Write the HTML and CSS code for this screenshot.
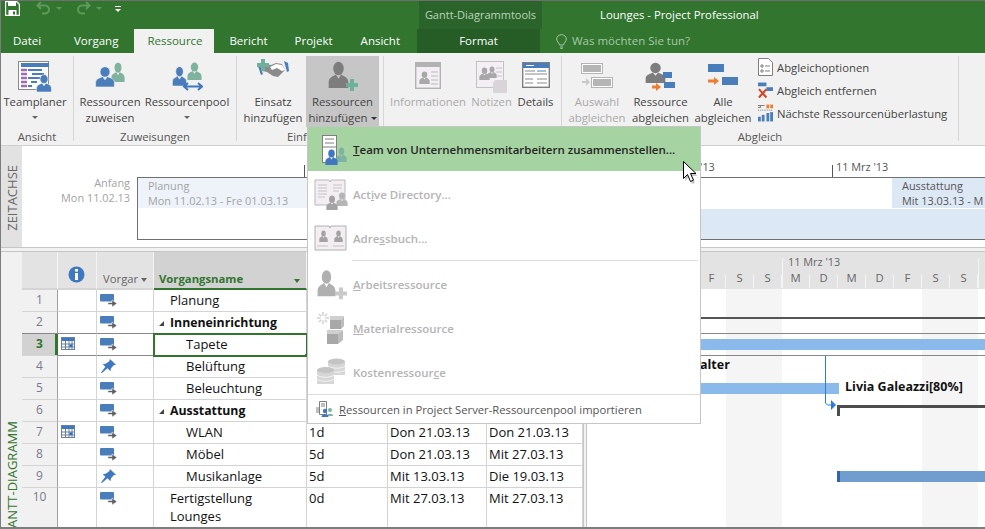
FILE: index.html
```html
<!DOCTYPE html>
<html lang="de">
<head>
<meta charset="utf-8">
<title>Lounges - Project Professional</title>
<link rel="stylesheet" href="styles.css">
</head>
<body>
<svg class="defs" width="0" height="0">
  <symbol id="person" viewBox="0 0 32 32" preserveAspectRatio="none"><circle cx="16" cy="9" r="8"/><path d="M1 32v-7c0-6 8-7 11-9l4 5 4-5c3 2 11 3 11 9v7z"/></symbol>
  <symbol id="mode" viewBox="0 0 17 13"><rect x="0" y="0" width="14" height="7.500" rx="1" fill="#4a7ebb"/><path d="M8 8.500h4V6l5 3.500-5 3.500v-2.500H8z" fill="#5f5f5f" stroke="#fff" stroke-width=".5"/></symbol>
  <symbol id="pin" viewBox="0 0 16 16"><path d="M9.500 0 16 6l-2.500.6-3 3.400-.4 3-3.200-3.200L1 15l-1-.5 4.600-6.200L1.800 5.400l3.200-.3 3.800-2.800z" fill="#3f78c0"/></symbol>
  <symbol id="cal" viewBox="0 0 14 13"><rect x=".5" y=".5" width="13" height="12" fill="#fff" stroke="#6b7f99"/><rect x="1" y="1" width="12" height="3" fill="#3f78c0"/><path d="M1 7h12M1 10h12M4.500 4v8M8 4v8M11 4v8" stroke="#6b7f99"/><rect x="8.500" y="7.500" width="3" height="2.500" fill="#1c6fd0"/></symbol>
</svg>
<div class="app">
  <header class="titlebar">
    <div class="qat">
      <svg class="qat-save" width="15" height="15" viewBox="0 0 15 15"><path d="M.5.500h11l3 3v11H.5z" fill="none" stroke="#fff" stroke-width="1.400"/><rect x="3" y="0" width="8" height="5" fill="#fff"/><rect x="3.500" y="9" width="8" height="5.500" fill="#fff"/><rect x="8" y="10.500" width="2" height="3" fill="#31752f"/></svg>
      <svg class="qat-undo" width="15" height="14" viewBox="0 0 15 14"><path d="M5 1 1.500 4.500 5 8M2 4.500h7a4 4 0 0 1 0 8H6" fill="none" stroke="#5f9a5c" stroke-width="2"/></svg>
      <span class="qat-caret"></span>
      <svg class="qat-redo" width="15" height="14" viewBox="0 0 15 14"><path d="m10 1 3.500 3.500L10 8m3-3.500H6a4 4 0 0 0 0 8h3" fill="none" stroke="#5f9a5c" stroke-width="2"/></svg>
      <span class="qat-caret"></span>
      <span class="qat-more"></span>
    </div>
    <div class="ctx-title">Gantt-Diagrammtools</div>
    <div class="doc-title">Lounges - Project Professional</div>
  </header>
  <nav class="tabbar">
    <span class="tab tab-file">Datei</span>
    <span class="tab">Vorgang</span>
    <span class="tab tab-active">Ressource</span>
    <span class="tab tab-n">Bericht</span>
    <span class="tab tab-n">Projekt</span>
    <span class="tab tab-last">Ansicht</span>
    <span class="tab tab-ctx">Format</span>
    <span class="tell">
      <svg width="11" height="15" viewBox="0 0 11 15"><path d="M3.500 11C3 8.500.7 7.500.7 5a4.800 4.300 0 0 1 9.600 0c0 2.500-2.300 3.500-2.800 6zM4 13h3M4.500 14.500h2" fill="none" stroke="#a9c9a7"/></svg>
      Was möchten Sie tun?
    </span>
  </nav>

  <section class="ribbon">
    <div class="grp grp-view">
      <div class="grp-body">
        <div class="btn w66">
          <svg class="ico ico-5" width="34" height="31" viewBox="0 0 34 31"><rect x=".5" y=".5" width="30" height="28" fill="#fff" stroke="#8a8a8a"/><rect x="3" y="2" width="28" height="4" fill="#4a7ebb"/><path d="M3 9h6M3 13h6M3 17h6M3 21h6M3 25h6" stroke="#9e6bb5" stroke-width="2.500"/><path d="M10 9h14M14 13h12M10 17h12M13 21h6M10 25h4" stroke="#4a7ebb" stroke-width="2"/><use href="#person" x="18" y="13" width="16" height="18" fill="#4a7ebb" stroke="#fff"/></svg>
          <span class="lbl">Teamplaner</span><span class="caret"></span>
        </div>
      </div>
      <div class="grp-name">Ansicht</div>
    </div>
    <div class="grp grp-assign">
      <div class="grp-body">
        <div class="btn w60">
          <svg class="ico" width="32" height="32" viewBox="0 0 32 32"><use href="#person" x="17" y="3" width="14" height="20" fill="#7fb3a0"/><use href="#person" x="1" y="7" width="20" height="21" fill="#4a7ebb" stroke="#f1f1f1"/></svg>
          <span class="lbl">Ressourcen<br>zuweisen</span>
        </div>
        <div class="btn w84 ml5">
          <svg class="ico" width="32" height="32" viewBox="0 0 32 32"><use href="#person" x="16" y="3" width="15" height="18" fill="#7fb3a0"/><use href="#person" x="1" y="7" width="15" height="20" fill="#4a7ebb" stroke="#f1f1f1"/><path d="M13 27.500h18M17 24l-4 3.500 4 3.500M27 24l4 3.500-4 3.500" fill="none" stroke="#3f78c0" stroke-width="2"/></svg>
          <span class="lbl">Ressourcenpool</span><span class="caret"></span>
        </div>
      </div>
      <div class="grp-name">Zuweisungen</div>
    </div>
    <div class="grp grp-insert">
      <div class="grp-body">
        <div class="btn w60">
          <svg class="ico" width="32" height="22" viewBox="0 0 32 22"><path d="M4 7l5-2 5 1 5-2 6 1 3 6-7 7-5-1-6-4-5-1z" fill="#8b8b8b"/><path d="M13 8l6-3 6 1 3 5-3 1-5-3-5 2z" fill="#fff"/><path d="M1 7l3 9 2-1-3-9zM27 2l4 2 1 8-2 1z" fill="#4a7ebb"/><path d="M4 0h4v4h4v4H8v4H4V8H0V4h4z" fill="#6fb09a"/></svg>
          <span class="lbl">Einsatz<br>hinzufügen</span>
        </div>
        <div class="btn w73 btn-hot ml3">
          <svg class="ico" width="32" height="32" viewBox="0 0 32 32"><use href="#person" x="1" y="2" width="21" height="27" fill="#7d7d7d"/><path d="M23 20h4v4h4v4h-4v4h-4v-4h-4v-4h4z" fill="#6fb09a"/></svg>
          <span class="lbl">Ressourcen<br>hinzufügen<span class="caret-in"></span></span>
        </div>
      </div>
      <div class="grp-name">Einfügen</div>
    </div>
    <div class="grp grp-props">
      <div class="grp-body">
        <div class="btn w76 off">
          <svg class="ico ico-6" width="26" height="27" viewBox="0 0 26 27"><rect x=".7" y=".7" width="24.600" height="25.600" fill="#f4eff4" stroke="#b3b3b3" stroke-width="1.400"/><rect x="1" y="1" width="24" height="4" fill="#b3b3b3"/><use href="#person" x="4" y="9" width="11" height="13" fill="#a8a8a8"/><path d="M16 10h7M16 14h7M16 18h7M16 22h7" stroke="#b9b9b9"/></svg>
          <span class="lbl">Informationen</span>
        </div>
        <div class="btn w41 ml5 off">
          <svg class="ico ico-5" width="32" height="32" viewBox="0 0 32 32"><rect x=".5" y=".5" width="27" height="26" fill="#f4eff4" stroke="#c2c2c2"/><use href="#person" x="11" y="5" width="10" height="12" fill="#a8a8a8"/><use href="#person" x="3" y="6" width="11" height="13" fill="#a8a8a8"/><path d="M20 7h6M20 11h6M20 15h6" stroke="#c2c2c2"/><path d="M17 32V22l2-3h12v13z" fill="#d8d4d8"/></svg>
          <span class="lbl">Notizen</span>
        </div>
        <div class="btn w35 ml6">
          <svg class="ico ico-6" width="28" height="26" viewBox="0 0 28 26"><rect x=".7" y=".7" width="26.600" height="24.600" fill="#fff" stroke="#7f7f7f" stroke-width="1.400"/><rect x="1" y="1" width="26" height="5" fill="#4a7ebb"/><path d="M4 3.500h8M17 9h8" stroke="#fff"/><path d="M3 9h10M3 12h22M3 17h8M3 21h8M15 17h10M15 21h10" stroke="#8a8a8a"/><path d="M15 9h9" stroke="#4a7ebb"/></svg>
          <span class="lbl">Details</span>
        </div>
      </div>
    </div>
    <div class="grp grp-level">
      <div class="grp-body">
        <div class="btn w58 off">
          <svg class="ico" width="32" height="32" viewBox="0 0 32 32"><rect x=".5" y="4.500" width="21" height="10" fill="#fff" stroke="#b5b5b5"/><rect x="2" y="6" width="18" height="7" fill="#b5b5b5"/><rect x="10.500" y="18.500" width="21" height="10" fill="#fff" stroke="#b5b5b5"/><rect x="12" y="20" width="18" height="7" fill="#b5b5b5"/><path d="M1 22h4v-3l4 4-4 4v-3H1z" fill="#c9c9c9"/></svg>
          <span class="lbl">Auswahl<br>abgleichen</span>
        </div>
        <div class="btn w57 ml6">
          <svg class="ico" width="32" height="34" viewBox="0 0 32 34"><use href="#person" x="0" y="3" width="21" height="21" fill="#7d7d7d"/><rect x="18" y="13" width="9" height="6" fill="#4a7ebb"/><rect x="19" y="23" width="11" height="6" fill="#4a7ebb"/><path d="M7 26.500h4V24l5 4-5 4v-2.500H7z" fill="#ed7d31"/></svg>
          <span class="lbl">Ressource<br>abgleichen</span>
        </div>
        <div class="btn w58 ml5">
          <svg class="ico" width="32" height="32" viewBox="0 0 32 32"><rect x="1" y="5" width="16" height="8" fill="#4a7ebb"/><rect x="15" y="18" width="16" height="8" fill="#4a7ebb"/><path d="M1 20.500h6V18l5 4-5 4v-2.500H1z" fill="#ed7d31"/></svg>
          <span class="lbl">Alle<br>abgleichen</span>
        </div>
        <ul class="small-list">
          <li><svg width="15" height="18" viewBox="0 0 15 18"><path d="M.5.500h10l4 4v13H.500z" fill="#fff" stroke="#7f7f7f"/><path d="M3 7h2v2H3zm0 5h2v2H3zM7 8h5M7 13h5" stroke="#7f7f7f" fill="none"/></svg>Abgleichoptionen</li>
          <li><svg width="15" height="17" viewBox="0 0 16 17"><rect x="0" y="0" width="9" height="4" fill="#4a7ebb"/><rect x="9" y="5" width="7" height="4" fill="#4a7ebb"/><path d="m1 7 8 9M9 7l-8 9" stroke="#d24726" stroke-width="2.200"/></svg>Abgleich entfernen</li>
          <li><svg width="15" height="18" viewBox="0 0 16 18"><path d="M0 1h7M0 3h3l-1-2" stroke="#777" fill="none"/><rect x="9" y="0" width="3" height="4" fill="#ed7d31"/><rect x="13" y="0" width="3" height="4" fill="#ed7d31"/><path d="M0 6h16" stroke="#777" stroke-dasharray="1 1"/><rect x="0" y="13" width="3" height="5" fill="#4a7ebb"/><rect x="4" y="11" width="3" height="7" fill="#4a7ebb"/><rect x="9" y="9" width="3" height="9" fill="#4a7ebb"/><rect x="13" y="8" width="3" height="10" fill="#4a7ebb"/></svg>Nächste Ressourcenüberlastung</li>
        </ul>
      </div>
      <div class="grp-name">Abgleich</div>
    </div>
  </section>

  <section class="timeline">
    <div class="side side-time"><span>ZEITACHSE</span></div>
    <div class="tl-canvas">
      <div class="tl-tick tl-t1"></div>
      <div class="tl-tick tl-t2"></div>
      <div class="tl-date tl-d1">'13</div>
      <div class="tl-date tl-d2">11 Mrz '13</div>
      <div class="tl-start">Anfang<br>Mon 11.02.13</div>
      <div class="tl-box"></div>
      <div class="tl-task tl-plan">Planung<br>Mon 11.02.13 - Fre 01.03.13</div>
      <div class="tl-task tl-aus">Ausstattung<br>Mit 13.03.13 - M</div>
      <div class="tl-fill"></div>
    </div>
  </section>
  <div class="divider"></div>

  <section class="main">
    <div class="side side-gantt"><span>GANTT-DIAGRAMM</span></div>
    <table class="sheet">
      <colgroup><col class="c-n"><col class="c-i"><col class="c-m"><col class="c-name"><col class="c-d"><col class="c-s"><col class="c-f"></colgroup>
      <thead>
        <tr>
          <th></th>
          <th><svg class="info" width="17" height="17" viewBox="0 0 17 17"><circle cx="8.500" cy="8.500" r="8" fill="#3f78c0"/><rect x="7" y="3" width="3" height="2.600" fill="#fff"/><rect x="7" y="7" width="3" height="7" fill="#fff"/></svg></th>
          <th class="th-mode">Vorgar<span class="hcaret"></span></th>
          <th class="th-name">Vorgangsname<span class="gcaret"></span></th>
          <th></th><th></th><th></th>
        </tr>
      </thead>
      <tbody>
        <tr><td class="num">1</td><td></td><td><svg class="m" width="17" height="13"><use href="#mode"/></svg></td><td class="t1">Planung</td><td></td><td></td><td></td></tr>
        <tr class="before-sel"><td class="num">2</td><td></td><td><svg class="m" width="17" height="13"><use href="#mode"/></svg></td><td class="t1 b"><span class="tri"></span>Inneneinrichtung</td><td></td><td></td><td></td></tr>
        <tr class="sel"><td class="num">3</td><td><svg class="c" width="14" height="13"><use href="#cal"/></svg></td><td><svg class="m" width="17" height="13"><use href="#mode"/></svg></td><td class="t2 cur">Tapete</td><td></td><td></td><td></td></tr>
        <tr><td class="num">4</td><td></td><td><svg class="p" width="15" height="15"><use href="#pin"/></svg></td><td class="t2">Belüftung</td><td></td><td></td><td></td></tr>
        <tr><td class="num">5</td><td></td><td><svg class="m" width="17" height="13"><use href="#mode"/></svg></td><td class="t2">Beleuchtung</td><td></td><td></td><td></td></tr>
        <tr><td class="num">6</td><td></td><td><svg class="m" width="17" height="13"><use href="#mode"/></svg></td><td class="t1 b"><span class="tri"></span>Ausstattung</td><td></td><td></td><td></td></tr>
        <tr><td class="num">7</td><td><svg class="c" width="14" height="13"><use href="#cal"/></svg></td><td><svg class="m" width="17" height="13"><use href="#mode"/></svg></td><td class="t2">WLAN</td><td>1d</td><td>Don 21.03.13</td><td>Don 21.03.13</td></tr>
        <tr><td class="num">8</td><td></td><td><svg class="m" width="17" height="13"><use href="#mode"/></svg></td><td class="t2">Möbel</td><td>5d</td><td>Don 21.03.13</td><td>Mit 27.03.13</td></tr>
        <tr><td class="num">9</td><td></td><td><svg class="p" width="15" height="15"><use href="#pin"/></svg></td><td class="t2">Musikanlage</td><td>5d</td><td>Mit 13.03.13</td><td>Die 19.03.13</td></tr>
        <tr class="tall"><td class="num">10</td><td></td><td><svg class="m" width="17" height="13"><use href="#mode"/></svg></td><td class="t1">Fertigstellung<br>Lounges</td><td>0d</td><td>Mit 27.03.13</td><td>Mit 27.03.13</td></tr>
      </tbody>
    </table>
    <div class="gutter"></div>
    <div class="gantt">
      <div class="g-head">
        <span class="g-month">11 Mrz '13</span>
        <span class="g-tick g-m1"></span><span class="g-tick g-m2"></span>
        <div class="g-days"><span>F</span><span>S</span><span>S</span><span>M</span><span>D</span><span>M</span><span>D</span><span>F</span><span>S</span><span>S</span></div>
      </div>
      <div class="g-we g-we1"></div>
      <div class="g-we g-we2"></div>
      <div class="g-sum1"></div>
      <div class="g-line g-l1"></div>
      <div class="g-line g-l2"></div>
      <div class="g-bar g-b1"></div>
      <div class="g-label g-alter">alter</div>
      <div class="g-bar g-b2"></div>
      <div class="g-label g-livia">Livia Galeazzi[80%]</div>
      <svg class="g-link" width="16" height="54" viewBox="0 0 16 54"><path d="M1.500 0v47l2 2h5" fill="none" stroke="#2b7cd3"/><path d="M7 44l5 5-5 5z" fill="#2b7cd3"/></svg>
      <div class="g-sum2"></div>
      <div class="g-bar2"></div>
    </div>
  </section>
  <div class="baseline"></div>

  <div class="menu">
    <div class="mi mi-hot">
      <svg class="mico" width="34" height="32" viewBox="0 0 34 32"><rect x="8.500" y="2.500" width="14" height="27" fill="#fff" stroke="#7f7f7f"/><path d="M11 6h9M11 10h9M8 14h15" stroke="#7f7f7f"/><use href="#person" x="22" y="14" width="11" height="15" fill="#7fb3a0"/><use href="#person" x="11" y="16" width="13" height="16" fill="#3f78c0"/></svg>
      <span><u>T</u>eam von Unternehmensmitarbeitern zusammenstellen...</span>
    </div>
    <div class="mi">
      <svg class="mico" width="34" height="32" viewBox="0 0 34 32"><path d="M1 2h14l1 2 1-2h14v25H1z" fill="#f2eef2" stroke="#b9b9b9"/><path d="M4 7h9M4 10h9M4 13h9M4 16h9M4 19h7M19 7h9M19 10h9M19 13h6" stroke="#c4c4c4"/><use href="#person" x="22" y="14" width="12" height="14" fill="#b5b5b5"/><use href="#person" x="12" y="17" width="12" height="15" fill="#a3a3a3"/></svg>
      <span>Act<u>i</u>ve Directory...</span>
    </div>
    <div class="mi">
      <svg class="mico" width="34" height="26" viewBox="0 0 34 26"><path d="M1 1h14l1 2 1-2h15v24H1z" fill="#f2eef2" stroke="#b0b0b0"/><use href="#person" x="5" y="5" width="9" height="12" fill="#a3a3a3"/><use href="#person" x="20" y="5" width="9" height="12" fill="#a3a3a3"/><path d="M3 21h11M19 21h11" stroke="#c4c4c4"/></svg>
      <span>Adre<u>s</u>sbuch...</span>
    </div>
    <div class="msep msep-in"></div>
    <div class="mi">
      <svg class="mico" width="34" height="31" viewBox="0 0 34 31"><use href="#person" x="3" y="1" width="19" height="27" fill="#b0b0b0"/><path d="M25 19h4v4h4v4h-4v4h-4v-4h-4v-4h4z" fill="#c9c9c9"/></svg>
      <span><u>A</u>rbeitsressource</span>
    </div>
    <div class="mi">
      <svg class="mico" width="34" height="32" viewBox="0 0 34 32"><path d="M9 0v12M3 6h12M5 2l8 8M13 2l-8 8" stroke="#d0d0d0" stroke-width="1.500"/><circle cx="9" cy="6" r="2.500" fill="#fff"/><path d="M16 4h14l-3 4H16z" fill="#cfcfcf"/><rect x="16" y="8" width="11" height="9" fill="#a8a8a8"/><path d="M27 8l3-4v10l-3 3z" fill="#bcbcbc"/><path d="M13 18h16l-5 4H13z" fill="#cfcfcf"/><rect x="13" y="22" width="11" height="10" fill="#a8a8a8"/><path d="M24 22l5-4v10l-5 4z" fill="#bcbcbc"/></svg>
      <span><u>M</u>aterialressource</span>
    </div>
    <div class="mi">
      <svg class="mico" width="34" height="28" viewBox="0 0 34 28"><rect x="14" y="3" width="17" height="14" fill="#d6d6d6"/><ellipse cx="22.500" cy="3.500" rx="8.500" ry="3" fill="#c4c4c4"/><path d="M14 8c3 3 14 3 17 0M14 12c3 3 14 3 17 0" stroke="#f4f4f4" fill="none"/><rect x="3" y="12" width="17" height="14" fill="#d6d6d6"/><ellipse cx="11.500" cy="12" rx="8.500" ry="3" fill="#c4c4c4"/><path d="M3 17c3 3 14 3 17 0M3 21c3 3 14 3 17 0" stroke="#f4f4f4" fill="none"/></svg>
      <span>Kostenressour<u>c</u>e</span>
    </div>
    <div class="msep"></div>
    <div class="mi-import">
      <svg width="17" height="16" viewBox="0 0 17 16"><path d="M3.500.500h7v13h-7z" fill="#fff" stroke="#7f7f7f"/><path d="M5 3h4M5 5h4M0 7h3M0 9h3M0 11h3" stroke="#7f7f7f"/><circle cx="14" cy="9" r="2" fill="#7fb3a0"/><path d="M11 15c0-3 6-3 6 0z" fill="#7fb3a0"/><circle cx="9" cy="10" r="2.200" fill="#3f78c0"/><path d="M5.500 16c0-4 7-4 7 0z" fill="#3f78c0"/></svg>
      <span><u>R</u>essourcen in Project Server-Ressourcenpool importieren</span>
    </div>
  </div>

  <svg class="pointer" width="15" height="24" viewBox="0 0 15 24"><path d="M2 3v17l4-4 3 7 3-1-3-7h5.500z" fill="#000" opacity=".22"/><path d="M.5.500v17l4-4 3 7 3-1.300-3-6.700h5.500z" fill="#fff" stroke="#000"/></svg>
</div>
</body>
</html>
```

FILE: styles.css
```css
* { box-sizing: border-box; }
html, body { margin: 0; padding: 0; background: #fff; }
.defs { position: absolute; }
.app {
  position: relative;
  width: 985px;
  height: 529px;
  overflow: hidden;
  display: flex;
  flex-direction: column;
  border-top: 1px solid #6f6f6f;
  border-left: 1px solid #7d7d7d;
  font-family: "Open Sans", "Noto Sans", sans-serif;
  font-size: 11.3px;
  color: #444;
}

/* title bar */
.titlebar { height: 28px; flex: none; display: flex; background: #31752f; color: #fff; }
.qat { width: 418px; display: flex; align-items: flex-start; padding-left: 4px; }
.qat-undo { margin: 0 0 0 16px; }
.qat-redo { margin: 0 0 0 14px; }
.qat-caret { width: 0; height: 0; margin: 6px 0 0 5px; border: 3px solid transparent; border-top: 3px solid #5f9a5c; border-bottom: 0; }
.qat-more { position: relative; width: 6px; height: 5px; margin: 5px 0 0 13px; border-top: 1px solid #fff; }
.qat-more::after { content: ""; position: absolute; left: 0; top: 2px; border: 3px solid transparent; border-top: 3px solid #fff; border-bottom: 0; }
.ctx-title { width: 123px; background: #2a642a; color: #bcd4ba; text-align: center; line-height: 27px; font-size: 11px; }
.doc-title { padding-left: 58px; line-height: 27px; }

/* tabs */
.tabbar { height: 24px; flex: none; display: flex; gap: 3px; background: #31752f; color: #fff; line-height: 24px; font-size: 11.5px; }
.tab { padding: 0 13px; }
.tab-n { padding: 0 12px; }
.tab-file { padding-left: 12px; width: 52px; margin-right: 5px; }
.tab-active { background: #f1f1f1; color: #31752f; width: 80px; }
.tab-last { margin-right: 1px; }
.tab-ctx { width: 123px; text-align: center; background: #265c26; }
.tell { margin-left: 13px; display: flex; align-items: center; gap: 5px; color: #a9c9a7; }

/* ribbon */
.ribbon { height: 93px; flex: none; display: flex; background: #f1f1f1; border-bottom: 1px solid #cfcfcf; padding-top: 3px; position: relative; }
.grp { display: flex; flex-direction: column; height: 85px; border-right: 1px solid #d6d6d6; position: relative; }
.grp-view { width: 73px; }
.grp-assign { width: 163px; }
.grp-insert { width: 147px; }
.grp-props { width: 178px; }
.grp-level { width: 397px; }
.grp-body { display: flex; height: 71px; padding-left: 6px; }
.grp-view .grp-body { padding-left: 1px; }
.grp-name { text-align: center; line-height: 16px; color: #555; margin-top: 2px; }
.btn { flex: none; display: flex; flex-direction: column; align-items: center; height: 71px; position: relative; line-height: 16px; text-align: center; white-space: nowrap; padding-top: 38px; }
.btn .ico { position: absolute; left: 50%; top: 3px; transform: translateX(-50%); }
.btn .ico-5 { top: 5px; }
.btn .ico-6 { top: 6px; }
.btn-hot { background: #c6c6c6; }
.off { color: #a9a9a9; }
.w35 { width: 35px; } .w41 { width: 41px; } .w57 { width: 57px; } .w58 { width: 58px; }
.w60 { width: 60px; } .w66 { width: 66px; } .w73 { width: 73px; } .w76 { width: 76px; } .w84 { width: 84px; }
.ml3 { margin-left: 3px; } .ml5 { margin-left: 5px; } .ml6 { margin-left: 6px; }
.caret { width: 0; height: 0; margin-top: 6px; border: 3px solid transparent; border-top: 3px solid #666; border-bottom: 0; }
.caret-in { display: inline-block; width: 0; height: 0; margin: 0 0 2px 3px; border: 3px solid transparent; border-top: 3px solid #333; border-bottom: 0; }
.small-list { list-style: none; margin: 0; padding: 2px 0 0 6px; display: flex; flex-direction: column; gap: 5px; white-space: nowrap; }
.small-list li { display: flex; align-items: center; gap: 4px; height: 18px; }
.small-list svg { flex: none; }

/* side strips */
.side { width: 21px; flex: none; display: flex; align-items: flex-end; justify-content: center; background: #e2e2e2; color: #666; font-size: 13px; }
.side span { writing-mode: vertical-rl; transform: rotate(180deg); white-space: nowrap; }
.side-time { padding-bottom: 16px; }
.side-gantt { background: #f1f1f1; color: #31752f; overflow: hidden; }
.side-gantt span { margin-bottom: -10px; }

/* timeline */
.timeline { height: 101px; flex: none; display: flex; font-size: 10.9px; }
.tl-canvas { position: relative; flex: 1; background: #fff; }
.tl-tick { position: absolute; top: 19px; width: 1px; height: 12px; background: #555; }
.tl-t1 { left: 282px; }
.tl-t2 { left: 810px; }
.tl-date { position: absolute; top: 13px; color: #555; line-height: 16px; }
.tl-d1 { left: 678px; }
.tl-d2 { left: 814px; }
.tl-start { position: absolute; right: 855px; top: 29px; text-align: right; line-height: 15px; color: #a3a3a3; }
.tl-box { position: absolute; left: 115px; top: 31px; right: 0; height: 63px; border: 1px solid #707070; border-right: 0; }
.tl-task { position: absolute; top: 32px; height: 30px; line-height: 15px; white-space: nowrap; overflow: hidden; }
.tl-plan { left: 116px; width: 170px; background: #eef3fa; padding-left: 10px; color: #a3a3a3; }
.tl-aus { left: 870px; right: 0; background: #dde8f5; padding-left: 10px; color: #555; }
.tl-fill { position: absolute; left: 600px; right: 0; top: 63px; height: 30px; background: #dde8f5; }
.divider { height: 5px; flex: none; background: #f1f1f1; border-top: 1px solid #c6c6c6; border-bottom: 1px solid #c6c6c6; }

/* sheet */
.main { height: 275px; flex: none; display: flex; }
.baseline { flex: 1; background: #7d7d7d; }
.sheet { flex: none; width: 561px; height: 275px; table-layout: fixed; border-collapse: separate; border-spacing: 0; font-size: 13px; color: #111; }
.c-n { width: 36px; } .c-i { width: 39px; } .c-m { width: 57px; } .c-name { width: 153px; } .c-d { width: 81px; } .c-s { width: 99px; } .c-f { width: 96px; }
.sheet th { height: 38px; padding: 0; background: #e3e3e3; border-right: 1px solid #f4f4f4; border-bottom: 2px solid #d4d4d4; font-weight: 400; font-size: 11.3px; text-align: left; color: #666; position: relative; vertical-align: bottom; }
.info { position: absolute; left: 10px; top: 14px; }
.sheet .th-mode { padding: 0 0 2px 6px; white-space: nowrap; }
.hcaret { position: absolute; left: 44px; top: 26px; border: 3.500px solid transparent; border-top: 4px solid #666; border-bottom: 0; }
.sheet .th-name { background: #d2d2d2; border-bottom-color: #31752f; color: #31752f; font-weight: 700; font-size: 11.3px; padding: 0 0 2px 5px; }
.gcaret { position: absolute; right: 6px; top: 27px; border: 3.500px solid transparent; border-top: 4px solid #31752f; border-bottom: 0; }
.sheet td { height: 22px; padding: 0 0 0 2px; border-right: 1px solid #d4d4d4; border-bottom: 1px solid #d4d4d4; vertical-align: top; line-height: 20px; white-space: nowrap; position: relative; background: #fff; }
.sheet .tall td { height: 39px; border-bottom: 0; line-height: 18px; padding-top: 1px; }
.sheet .tall .num { padding-top: 0; }
.sheet .num { background: #f1f1f1; border-right-color: #a0a0a0; color: #7a7a8c; text-align: center; font-size: 12px; padding: 0; }
.sheet td.t1 { padding-left: 16px; }
.sheet td.t2 { padding-left: 32px; }
.sheet td.b { font-weight: 700; font-size: 12.3px; padding-top: 1px; }
.tri { position: absolute; left: 5px; top: 9px; width: 0; height: 0; border-left: 5px solid transparent; border-bottom: 5px solid #444; }
.m { position: absolute; left: 3px; top: 4px; }
.p { position: absolute; left: 4px; top: 3px; }
.c { position: absolute; left: 3px; top: 3px; }
.before-sel td { border-bottom-color: #888; }
.sel td { border-bottom-color: #888; }
.sel .num { background: #d2d2d2; color: #31752f; font-weight: 700; box-shadow: inset -2px 0 0 #31752f; border-right-color: #31752f; border-bottom-color: #d4d4d4; }
.sel .cur { outline: 2px solid #31752f; outline-offset: -1px; z-index: 1; }
.sel .cur::after { content: ""; position: absolute; right: -2px; bottom: -2px; width: 3px; height: 3px; background: #31752f; }

/* gantt chart */
.gutter { flex: none; width: 4px; background: #f1f1f1; border-left: 1px solid #c6c6c6; border-right: 1px solid #c6c6c6; }
.gantt { position: relative; flex: 1; background: #fff; overflow: hidden; }
.g-head { position: absolute; left: 0; top: 0; right: 0; height: 37px; background: #e3e3e3; color: #666; }
.g-month { position: absolute; left: 201px; top: 2px; line-height: 16px; font-size: 10.9px; }
.g-tick { position: absolute; top: 6px; width: 1px; height: 30px; background: #f4f4f4; }
.g-m1 { left: 195px; }
.g-m2 { left: 391px; }
.g-days { position: absolute; left: 111px; bottom: 1px; display: flex; height: 13px; }
.g-days span { width: 28px; text-align: center; line-height: 6px; border-right: 1px solid #f4f4f4; }
.g-we { position: absolute; top: 37px; bottom: 0; width: 56px; background: #f5f5f5; }
.g-we1 { left: 139px; }
.g-we2 { left: 335px; }
.g-sum1 { position: absolute; left: 0; right: 0; top: 65px; height: 2px; background: #555; }
.g-line { position: absolute; left: 0; right: 0; height: 1px; background: #888; }
.g-l1 { top: 81px; }
.g-l2 { top: 103px; }
.g-bar { position: absolute; height: 11px; background: #8ab9eb; }
.g-b1 { left: 0; right: 0; top: 87px; }
.g-b2 { left: 0; width: 252px; top: 131px; }
.g-label { position: absolute; font-weight: 700; color: #111; font-size: 12.5px; line-height: 16px; white-space: nowrap; }
.g-alter { left: 113px; top: 105px; }
.g-livia { left: 258px; top: 127px; }
.g-link { position: absolute; left: 237px; top: 104px; }
.g-sum2 { position: absolute; left: 250px; right: 0; top: 153px; height: 11px; border-top: 3px solid #4d4d4d; border-left: 3px solid #4d4d4d; }
.g-bar2 { position: absolute; left: 250px; right: 0; top: 219px; height: 11px; background: #6f9dd0; border-left: 3px solid #2f65ad; }

/* menu */
.menu { position: absolute; left: 306px; top: 125px; width: 394px; height: 298px; background: #fff; border: 1px solid #c6c6c6; display: flex; flex-direction: column; z-index: 5; }
.mi { height: 44px; flex: none; display: flex; align-items: center; padding-left: 45px; position: relative; font-weight: 600; font-size: 11.5px; color: #b4b4b4; white-space: nowrap; }
.mi-hot { background: #a5d3a1; color: #262626; margin-bottom: 1px; }
.mico { position: absolute; left: 6px; top: 50%; transform: translateY(-50%); }
.msep { height: 1px; flex: none; background: #dcdcdc; }
.msep-in { margin: 0 2px 1px 44px; }
.mi-import { flex: 1; display: flex; align-items: center; gap: 6px; padding-left: 8px; color: #555; font-size: 11.25px; white-space: nowrap; }
.pointer { position: absolute; left: 682px; top: 160px; z-index: 6; }
```
